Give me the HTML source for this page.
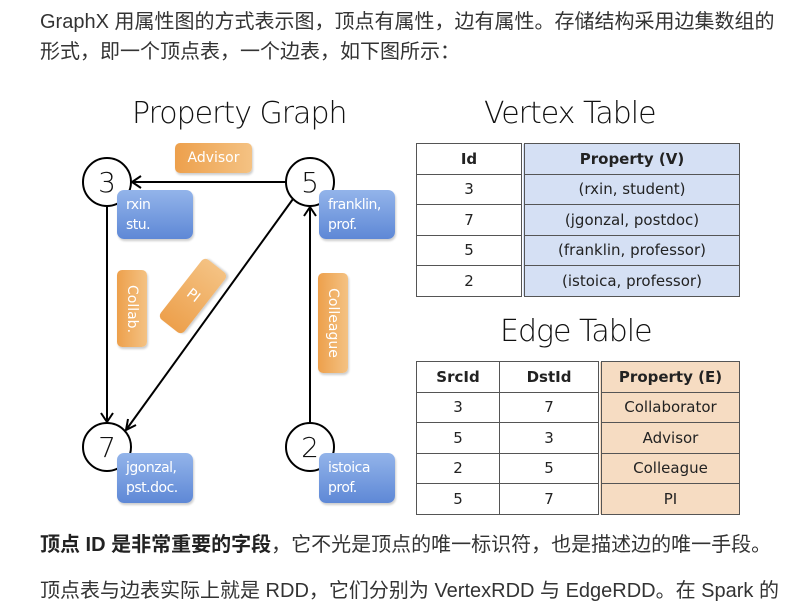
<!DOCTYPE html>
<html><head><meta charset="utf-8"><style>
html,body{margin:0;width:796px;height:614px;overflow:hidden;}
body{background:#fff;position:relative;font-family:"Liberation Sans","Noto Sans CJK SC",sans-serif;}
.p{position:absolute;left:40px;font-size:20px;color:#333;white-space:nowrap;line-height:30px}
.t{position:absolute;font-family:"DejaVu Sans","Liberation Sans",sans-serif;font-size:30px;color:#111;white-space:nowrap;letter-spacing:-1px;font-weight:200;}
.b{position:absolute;background:linear-gradient(#93b4ea,#5e88d6);border-radius:7px;color:#fff;font-size:14px;line-height:20px;padding:5px 0 0 9px;box-sizing:border-box;box-shadow:1px 2px 2px rgba(0,0,0,.2);font-family:"DejaVu Sans",sans-serif;letter-spacing:-0.5px}
.o{position:absolute;background:linear-gradient(90deg,#eda04c,#f4c283);border-radius:5px;color:#fff;font-size:14px;display:flex;align-items:center;justify-content:center;box-shadow:1px 2px 2px rgba(0,0,0,.2);font-family:"DejaVu Sans",sans-serif;}
table{position:absolute;border-collapse:collapse;font-family:"DejaVu Sans",sans-serif;font-size:15px;color:#222;}
td{border:1.5px solid #555;text-align:center;padding:0;height:29.5px;}
th{border:1.5px solid #555;font-weight:bold;height:29.5px;padding:0;font-size:15px}
.bl{background:#d5e0f4}.or{background:#f6dcc2}
</style></head><body>
<div class="p" style="top:7px">GraphX 用属性图的方式表示图，顶点有属性，边有属性。存储结构采用边集数组的</div>
<div class="p" style="top:37px">形式，即一个顶点表，一个边表，如下图所示：</div>

<div class="t" style="left:132px;top:96px">Property Graph</div>
<div class="t" style="left:484px;top:96px">Vertex Table</div>
<div class="t" style="left:500px;top:314px">Edge Table</div>

<svg style="position:absolute;left:0;top:0" width="796" height="614">
<g stroke="#000" stroke-width="2" fill="none">
<circle cx="107" cy="182" r="24"/><circle cx="310" cy="182" r="24"/>
<circle cx="107" cy="447" r="24"/><circle cx="310" cy="447" r="24"/>
<line x1="286" y1="182" x2="133" y2="182"/><path d="M141 176 L132 182 L141 188"/>
<line x1="107" y1="206" x2="107" y2="422"/><path d="M101 413 L107 422 L113 413"/>
<line x1="293" y1="199" x2="126" y2="430"/><path d="M128 419 L126 430 L136 425"/>
<line x1="310" y1="423" x2="310" y2="207"/><path d="M304 216 L310 207 L316 216"/>
</g>
<g font-family="DejaVu Sans,sans-serif" font-size="28" font-weight="300" text-anchor="middle" fill="#111">
<text x="107" y="192">3</text><text x="310" y="192">5</text><text x="107" y="457">7</text><text x="310" y="457">2</text>
</g>
</svg>

<div class="o" style="left:175px;top:143px;width:77px;height:30px">Advisor</div>
<div class="b" style="left:117px;top:190px;width:76px;height:49px">rxin<br>stu.</div>
<div class="b" style="left:319px;top:190px;width:76px;height:49px">franklin,<br>prof.</div>
<div class="b" style="left:117px;top:453px;width:76px;height:50px">jgonzal,<br>pst.doc.</div>
<div class="b" style="left:319px;top:453px;width:76px;height:50px">istoica<br>prof.</div>
<div class="o" style="left:117px;top:270px;width:30px;height:77px"><span style="transform:rotate(90deg);display:block;white-space:nowrap">Collab.</span></div>
<div class="o" style="left:318px;top:273px;width:30px;height:100px"><span style="transform:rotate(90deg);display:block;white-space:nowrap">Colleague</span></div>
<div class="o" style="left:155px;top:281px;width:76px;height:30px;transform:rotate(-52deg)"><span style="transform:rotate(90deg);display:block">PI</span></div>

<table style="left:416px;top:143px;width:324px">
<tr><th style="width:104px">Id</th><th class="bl" style="border-left:4px double #555">Property (V)</th></tr>
<tr><td>3</td><td class="bl" style="border-left:4px double #555">(rxin, student)</td></tr>
<tr><td>7</td><td class="bl" style="border-left:4px double #555">(jgonzal, postdoc)</td></tr>
<tr><td>5</td><td class="bl" style="border-left:4px double #555">(franklin, professor)</td></tr>
<tr><td>2</td><td class="bl" style="border-left:4px double #555">(istoica, professor)</td></tr>
</table>

<table style="left:416px;top:361px;width:324px">
<tr><th style="width:82px">SrcId</th><th style="width:98px">DstId</th><th class="or" style="border-left:4px double #555">Property (E)</th></tr>
<tr><td>3</td><td>7</td><td class="or" style="border-left:4px double #555">Collaborator</td></tr>
<tr><td>5</td><td>3</td><td class="or" style="border-left:4px double #555">Advisor</td></tr>
<tr><td>2</td><td>5</td><td class="or" style="border-left:4px double #555">Colleague</td></tr>
<tr><td>5</td><td>7</td><td class="or" style="border-left:4px double #555">PI</td></tr>
</table>

<div class="p" style="top:530px"><b style="color:#222">顶点 ID 是非常重要的字段</b>，它不光是顶点的唯一标识符，也是描述边的唯一手段。</div>
<div class="p" style="top:576px">顶点表与边表实际上就是 RDD，它们分别为 VertexRDD 与 EdgeRDD。在 Spark 的</div>
</body></html>
